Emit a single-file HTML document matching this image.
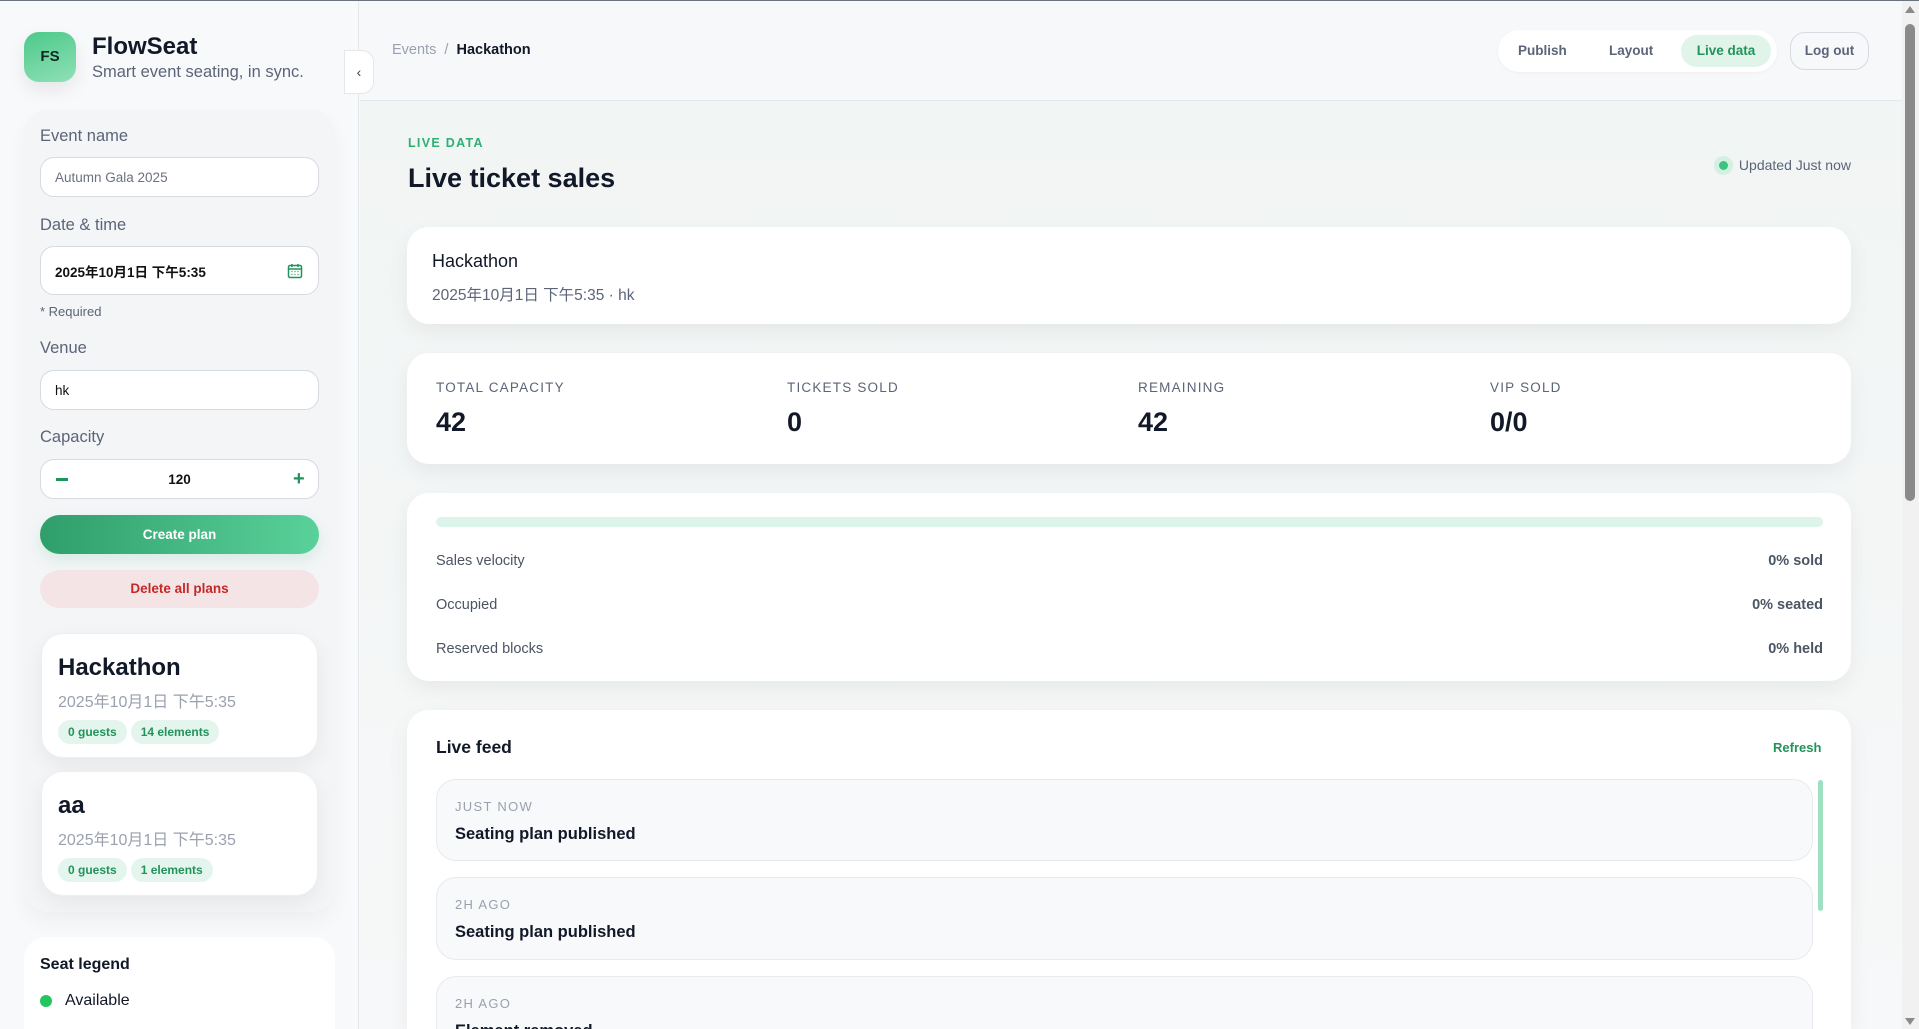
<!DOCTYPE html>
<html><head><meta charset="utf-8"><style>
*{box-sizing:border-box;margin:0;padding:0}
html,body{width:1919px;height:1029px;overflow:hidden}
body{background:#f7f8fa;font-family:"Liberation Sans","Noto Sans CJK SC",sans-serif;color:#111827;position:relative}
.a{position:absolute}
.topline{left:0;top:0;width:1919px;height:1px;background:#6b7280}
.side{left:0;top:1px;width:359px;height:1028px;background:#f8f9fb;border-right:1px solid #e5e7eb}
.logo{left:24px;top:32px;width:52px;height:50px;border-radius:15px;background:linear-gradient(160deg,#4cc98a,#8fe0b6);box-shadow:0 8px 18px rgba(0,0,0,.08);font-weight:bold;font-size:15px;line-height:50px;text-align:center;color:#0f2a1e}
.lbl{font-size:16.5px;color:#5b6478}
.inp{left:40px;width:279px;background:#fff;border:1px solid #d6dae1;border-radius:14px;font-size:13.5px;padding-left:14px;display:flex;align-items:center}
.card{background:#fff;border-radius:22px;box-shadow:0 8px 22px rgba(0,0,0,.06)}
.chip{display:inline-block;background:#e3f5ec;color:#22935a;font-weight:bold;font-size:12px;border-radius:12px;padding:5px 10px;margin-right:4px}
.slbl{font-size:13.5px;letter-spacing:1.2px;color:#5b6478}
.sval{font-size:27px;font-weight:bold}
.row{font-size:14.5px;color:#4b5563}
.rv{font-size:14.5px;font-weight:bold;color:#4b5563;right:0}
.feed{left:436px;width:1377px;background:#f8f9fa;border:1px solid #e8eaee;border-radius:20px;overflow:hidden}
.ft{font-size:13px;letter-spacing:1.3px;color:#9aa1ae;position:absolute;left:18px;top:19px}
.fb{font-size:16.5px;font-weight:bold;position:absolute;left:18px;top:45px}
</style></head><body>
<div class="a side"></div>
<div class="a topline"></div>
<div class="a logo">FS</div>
<div class="a" style="left:92px;top:33px;font-size:24px;font-weight:bold">FlowSeat</div>
<div class="a" style="left:92px;top:63px;font-size:16.5px;color:#5b6478">Smart event seating, in sync.</div>
<div class="a" style="left:344px;top:50px;width:30px;height:44px;background:#fff;border:1px solid #e5e7eb;border-radius:0 12px 12px 0;text-align:center;line-height:42px;font-size:14px;color:#374151">‹</div>

<div class="a" style="left:24px;top:110px;width:311px;height:802px;background:#f3f5f7;border-radius:24px;box-shadow:0 10px 20px rgba(0,0,0,.04)"></div>
<div class="a lbl" style="left:40px;top:127px">Event name</div>
<div class="a inp" style="top:157px;height:40px;color:#6b7280">Autumn Gala 2025</div>
<div class="a lbl" style="left:40px;top:216px">Date &amp; time</div>
<div class="a inp" style="top:246px;height:49px;font-weight:bold;color:#111">2025年10月1日 下午5:35
<svg class="a" style="left:246px;top:16px" width="16" height="16" viewBox="0 0 16 16"><rect x="1.5" y="2.5" width="13" height="12" rx="1.5" fill="none" stroke="#22935a" stroke-width="1.5"/><path d="M1.5 6h13M5 1v3M11 1v3" stroke="#22935a" stroke-width="1.5"/><path d="M4.5 8.5h1M7.5 8.5h1M10.5 8.5h1M4.5 11.5h1M7.5 11.5h1M10.5 11.5h1" stroke="#22935a" stroke-width="1.3"/></svg></div>
<div class="a" style="left:40px;top:304px;font-size:13px;color:#5b6478">* Required</div>
<div class="a lbl" style="left:40px;top:339px">Venue</div>
<div class="a inp" style="top:370px;height:40px;color:#111">hk</div>
<div class="a lbl" style="left:40px;top:428px">Capacity</div>
<div class="a inp" style="top:459px;height:40px;justify-content:center;font-weight:bold;color:#111;padding:0">120
<span class="a" style="left:15px;top:18px;width:12px;height:3px;background:#22935a"></span>
<span class="a" style="left:252px;top:8px;font-size:20px;font-weight:bold;color:#22935a">+</span></div>
<div class="a" style="left:40px;top:515px;width:279px;height:39px;border-radius:20px;background:linear-gradient(90deg,#2f9e6a,#5ad19a);color:#fff;font-weight:bold;font-size:13.5px;text-align:center;line-height:39px;box-shadow:0 6px 14px rgba(60,180,120,.15)">Create plan</div>
<div class="a" style="left:40px;top:570px;width:279px;height:38px;border-radius:19px;background:#f4e4e6;color:#c62828;font-weight:bold;font-size:13.5px;text-align:center;line-height:38px">Delete all plans</div>

<div class="a card" style="left:41px;top:633px;width:277px;height:125px;border:1px solid #eceef2">
<div class="a" style="left:16px;top:20px;font-size:24px;font-weight:bold">Hackathon</div>
<div class="a" style="left:16px;top:54px;font-size:16px;color:#9aa1ae">2025年10月1日 下午5:35</div>
<div class="a" style="left:16px;top:86px;white-space:nowrap"><span class="chip">0 guests</span><span class="chip">14 elements</span></div></div>
<div class="a card" style="left:41px;top:771px;width:277px;height:125px;border:1px solid #eceef2">
<div class="a" style="left:16px;top:20px;font-size:24px;font-weight:bold">aa</div>
<div class="a" style="left:16px;top:54px;font-size:16px;color:#9aa1ae">2025年10月1日 下午5:35</div>
<div class="a" style="left:16px;top:86px;white-space:nowrap"><span class="chip">0 guests</span><span class="chip">1 elements</span></div></div>

<div class="a" style="left:24px;top:937px;width:311px;height:92px;background:#fff;border-radius:22px 22px 0 0"></div>
<div class="a" style="left:40px;top:956px;font-size:16px;font-weight:bold">Seat legend</div>
<div class="a" style="left:40px;top:995px;width:12px;height:12px;border-radius:50%;background:#22c55e"></div>
<div class="a" style="left:65px;top:992px;font-size:16px">Available</div>

<!-- header -->
<div class="a" style="left:392px;top:42px;font-size:14.5px;color:#9aa1ae">Events &nbsp;/&nbsp; <span style="color:#111827;font-weight:bold">Hackathon</span></div>
<div class="a" style="left:1498px;top:30px;width:279px;height:42px;background:#fff;border-radius:21px;box-shadow:0 1px 3px rgba(0,0,0,.04)">
<div class="a" style="left:20px;top:13px;font-size:13.5px;font-weight:bold;color:#5b6478">Publish</div>
<div class="a" style="left:111px;top:13px;font-size:13.5px;font-weight:bold;color:#5b6478">Layout</div>
<div class="a" style="left:183px;top:5px;width:90px;height:32px;border-radius:16px;background:#e0f4ea;color:#22935a;font-size:13.5px;font-weight:bold;text-align:center;line-height:32px">Live data</div></div>
<div class="a" style="left:1790px;top:32px;width:79px;height:38px;border:1px solid #d6dae1;border-radius:15px;background:#f7f8fa;font-size:13.5px;font-weight:bold;color:#5b6478;text-align:center;line-height:36px">Log out</div>

<!-- main -->
<div class="a" style="left:360px;top:100px;width:1544px;height:929px;background:linear-gradient(180deg,#f1f5f4,#f7f8f9);border-top:1px solid #e5e7eb"></div>
<div class="a" style="left:408px;top:136px;font-size:12.5px;font-weight:bold;letter-spacing:1.3px;color:#2fb072">LIVE DATA</div>
<div class="a" style="left:408px;top:163px;font-size:27px;font-weight:bold">Live ticket sales</div>
<div class="a" style="left:1714px;top:156px;width:19px;height:19px;border-radius:50%;background:#d3f0e2"></div>
<div class="a" style="left:1719px;top:161px;width:9px;height:9px;border-radius:50%;background:#3cc47e"></div>
<div class="a" style="left:1734px;top:157px;font-size:14px;color:#5b6478;width:117px;text-align:right">Updated Just now</div>

<div class="a card" style="left:407px;top:227px;width:1444px;height:97px">
<div class="a" style="left:25px;top:24px;font-size:18px;color:#111827">Hackathon</div>
<div class="a" style="left:25px;top:56px;font-size:15.5px;color:#5b6478">2025年10月1日 下午5:35 · hk</div></div>

<div class="a card" style="left:407px;top:353px;width:1444px;height:111px">
<div class="a slbl" style="left:29px;top:27px">TOTAL CAPACITY</div><div class="a sval" style="left:29px;top:54px">42</div>
<div class="a slbl" style="left:380px;top:27px">TICKETS SOLD</div><div class="a sval" style="left:380px;top:54px">0</div>
<div class="a slbl" style="left:731px;top:27px">REMAINING</div><div class="a sval" style="left:731px;top:54px">42</div>
<div class="a slbl" style="left:1083px;top:27px">VIP SOLD</div><div class="a sval" style="left:1083px;top:54px">0/0</div></div>

<div class="a card" style="left:407px;top:493px;width:1444px;height:188px">
<div class="a" style="left:29px;top:24px;width:1387px;height:10px;border-radius:5px;background:#dcf4e9"></div>
<div class="a" style="left:29px;top:60px;width:1387px;height:20px"><span class="a row">Sales velocity</span><span class="a rv">0% sold</span></div>
<div class="a" style="left:29px;top:104px;width:1387px;height:20px"><span class="a row">Occupied</span><span class="a rv">0% seated</span></div>
<div class="a" style="left:29px;top:148px;width:1387px;height:20px"><span class="a row">Reserved blocks</span><span class="a rv">0% held</span></div></div>

<div class="a" style="left:407px;top:710px;width:1444px;height:319px;background:#fff;border-radius:22px 22px 0 0;box-shadow:0 8px 22px rgba(0,0,0,.06)"></div>
<div class="a" style="left:436px;top:737px;font-size:17.5px;font-weight:bold">Live feed</div>
<div class="a" style="left:1773px;top:740px;font-size:13px;font-weight:bold;color:#22935a">Refresh</div>
<div class="a feed" style="top:779px;height:82px"><span class="ft">JUST NOW</span><span class="fb">Seating plan published</span></div>
<div class="a feed" style="top:877px;height:83px"><span class="ft">2H AGO</span><span class="fb">Seating plan published</span></div>
<div class="a feed" style="top:976px;height:53px;border-bottom:none;border-radius:20px 20px 0 0"><span class="ft">2H AGO</span><span class="fb">Element removed</span></div>
<div class="a" style="left:1818px;top:780px;width:5px;height:131px;border-radius:3px;background:#9ee0c0"></div>

<!-- scrollbar -->
<div class="a" style="left:1902px;top:1px;width:17px;height:1028px;background:#f1f1f1"></div>
<div class="a" style="left:1905px;top:24px;width:10px;height:477px;border-radius:5px;background:#8a8a8a"></div>
<div class="a" style="left:1905px;top:6px;width:0;height:0;border-left:5px solid transparent;border-right:5px solid transparent;border-bottom:7px solid #8a8a8a"></div>
<div class="a" style="left:1905px;top:1018px;width:0;height:0;border-left:5px solid transparent;border-right:5px solid transparent;border-top:7px solid #8a8a8a"></div>
</body></html>
